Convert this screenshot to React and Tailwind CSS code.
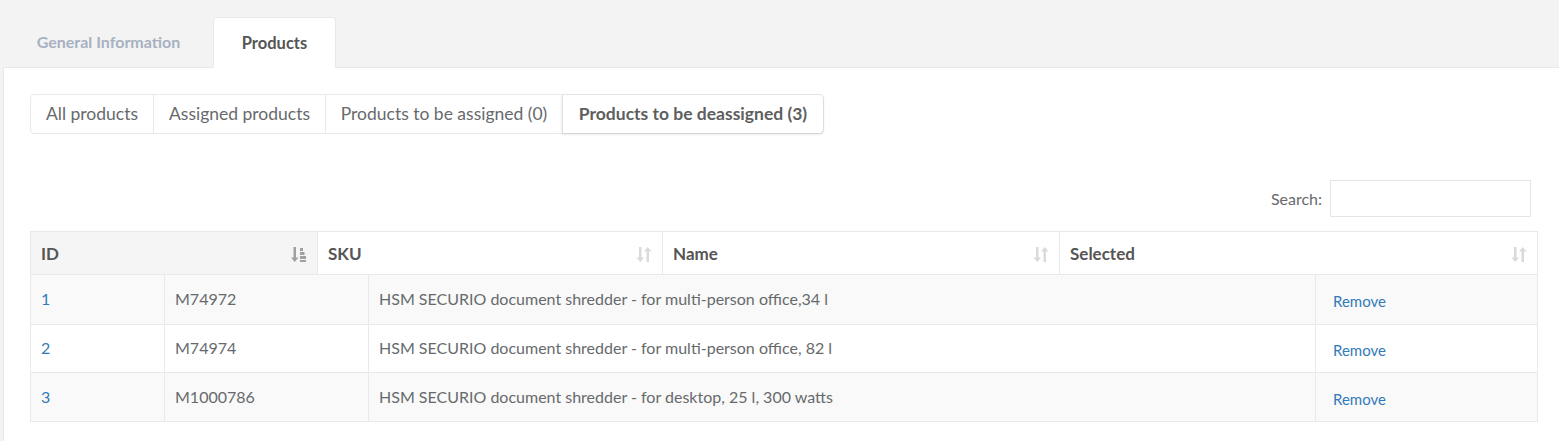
const font = { fontFamily: 'Lato, "Open Sans", sans-serif' };

const headers = [
  { label: 'ID', w: 'w-[286px]', sorted: true },
  { label: 'SKU', w: 'w-[345px]' },
  { label: 'Name', w: 'w-[397px]' },
  { label: 'Selected', w: 'flex-1' },
];

const rows = [
  { id: 1, sku: 'M74972', name: 'HSM SECURIO document shredder - for multi-person office,34 l' },
  { id: 2, sku: 'M74974', name: 'HSM SECURIO document shredder - for multi-person office, 82 l' },
  { id: 3, sku: 'M1000786', name: 'HSM SECURIO document shredder - for desktop, 25 l, 300 watts' },
];

function SortIcon({ sorted }) {
  if (sorted) {
    return (
      <svg width="16" height="17" viewBox="0 0 16 17" className="text-[#a0a0a0]">
        <path d="M2.5 1h2.5v10.5h2.5L3.75 16 0 11.5h2.5z" fill="currentColor" />
        <rect x="9" y="2" width="3" height="3" fill="currentColor" />
        <rect x="9" y="6" width="4.5" height="3" fill="currentColor" />
        <rect x="9" y="10" width="6" height="3" fill="currentColor" />
        <rect x="9" y="14" width="6" height="2" fill="currentColor" />
      </svg>
    );
  }
  return (
    <svg width="16" height="17" viewBox="0 0 16 17" className="text-[#dadada]">
      <path d="M3 1h2.5v10.5H8L4.25 16 0.5 11.5H3z" fill="currentColor" />
      <path d="M10.5 16H13V5.5h2.5L11.75 1 8 5.5h2.5z" fill="currentColor" />
    </svg>
  );
}

export default function App() {
  const subTabs = [
    { label: 'All products', w: 'w-[122px]' },
    { label: 'Assigned products', w: 'w-[172px]' },
    { label: 'Products to be assigned (0)', w: 'w-[237px]' },
  ];

  return (
    <div className="min-h-screen bg-[#f3f3f3] text-[#676a6c]" style={font}>
      <div className="flex h-[67px] items-end pl-[4px]">
        <div className="flex h-[50px] w-[209px] items-center justify-center text-[16px] font-bold text-[#a7b1c2]">
          General Information
        </div>
        <div className="relative -mb-px flex h-[51px] w-[123px] items-center justify-center rounded-t-[4px] border border-b-0 border-[#e7eaec] bg-white text-[16.5px] font-bold text-[#555]">
          Products
        </div>
      </div>

      <div className="ml-[3px] border-l border-t border-[#e7eaec] bg-white pb-[40px] pl-[26px] pr-[21px] pt-[26px]">
        <div className="flex">
          <div className="flex h-[40px] rounded-[4px] border border-[#e7eaec]">
            {subTabs.map((t, i) => (
              <div
                key={t.label}
                className={`flex items-center justify-center text-[17.5px] ${t.w} ${i > 0 ? 'border-l border-[#e7eaec]' : ''}`}
              >
                {t.label}
              </div>
            ))}
            <div className="flex w-[261px] items-center justify-center rounded-r-[4px] border-l border-[#dfe2e4] text-[17.5px] font-bold text-[#5e5e5e] shadow-[0_1px_3px_rgba(0,0,0,0.15)]">
              Products to be deassigned (3)
            </div>
          </div>
        </div>

        <div className="mt-[46px] flex items-center justify-end gap-[8px] pr-[7px]">
          <span className="text-[16px]">Search:</span>
          <div className="h-[37px] w-[201px] border border-[#e5e6e7] bg-white" />
        </div>

        <div className="mt-[14px] border border-[#e7eaec]">
          <div className="flex h-[43px] border-b border-[#e7eaec]">
            {headers.map((h, i) => (
              <div
                key={h.label}
                className={`flex items-center justify-between pl-[10px] pr-[10px] pt-[2px] ${h.w} ${i > 0 ? 'border-l border-[#e7eaec]' : ''} ${h.sorted ? 'bg-[#f5f5f5]' : 'bg-white'}`}
              >
                <span className="text-[17px] font-bold text-[#555]">{h.label}</span>
                <SortIcon sorted={h.sorted} />
              </div>
            ))}
          </div>
          {rows.map((r, i) => (
            <div
              key={r.id}
              className={`flex h-[48.5px] text-[16px] ${i > 0 ? 'border-t border-[#e7eaec]' : ''} ${i % 2 === 0 ? 'bg-[#f9f9f9]' : 'bg-white'}`}
            >
              <div className="flex w-[133px] items-center pl-[10px] text-[#337ab7]">{r.id}</div>
              <div className="flex w-[204px] items-center border-l border-[#e7eaec] pl-[10px]">{r.sku}</div>
              <div className="flex w-[947px] items-center border-l border-[#e7eaec] pl-[10px]">{r.name}</div>
              <div className="flex flex-1 items-center border-l border-[#e7eaec] pl-[17px] pt-[4px] text-[15px] text-[#337ab7]">
                Remove
              </div>
            </div>
          ))}
        </div>

        <div className="mt-[14px] text-[16px] text-[#337ab7]">Showing 1 to 3 of 3 entries</div>
      </div>
    </div>
  );
}
